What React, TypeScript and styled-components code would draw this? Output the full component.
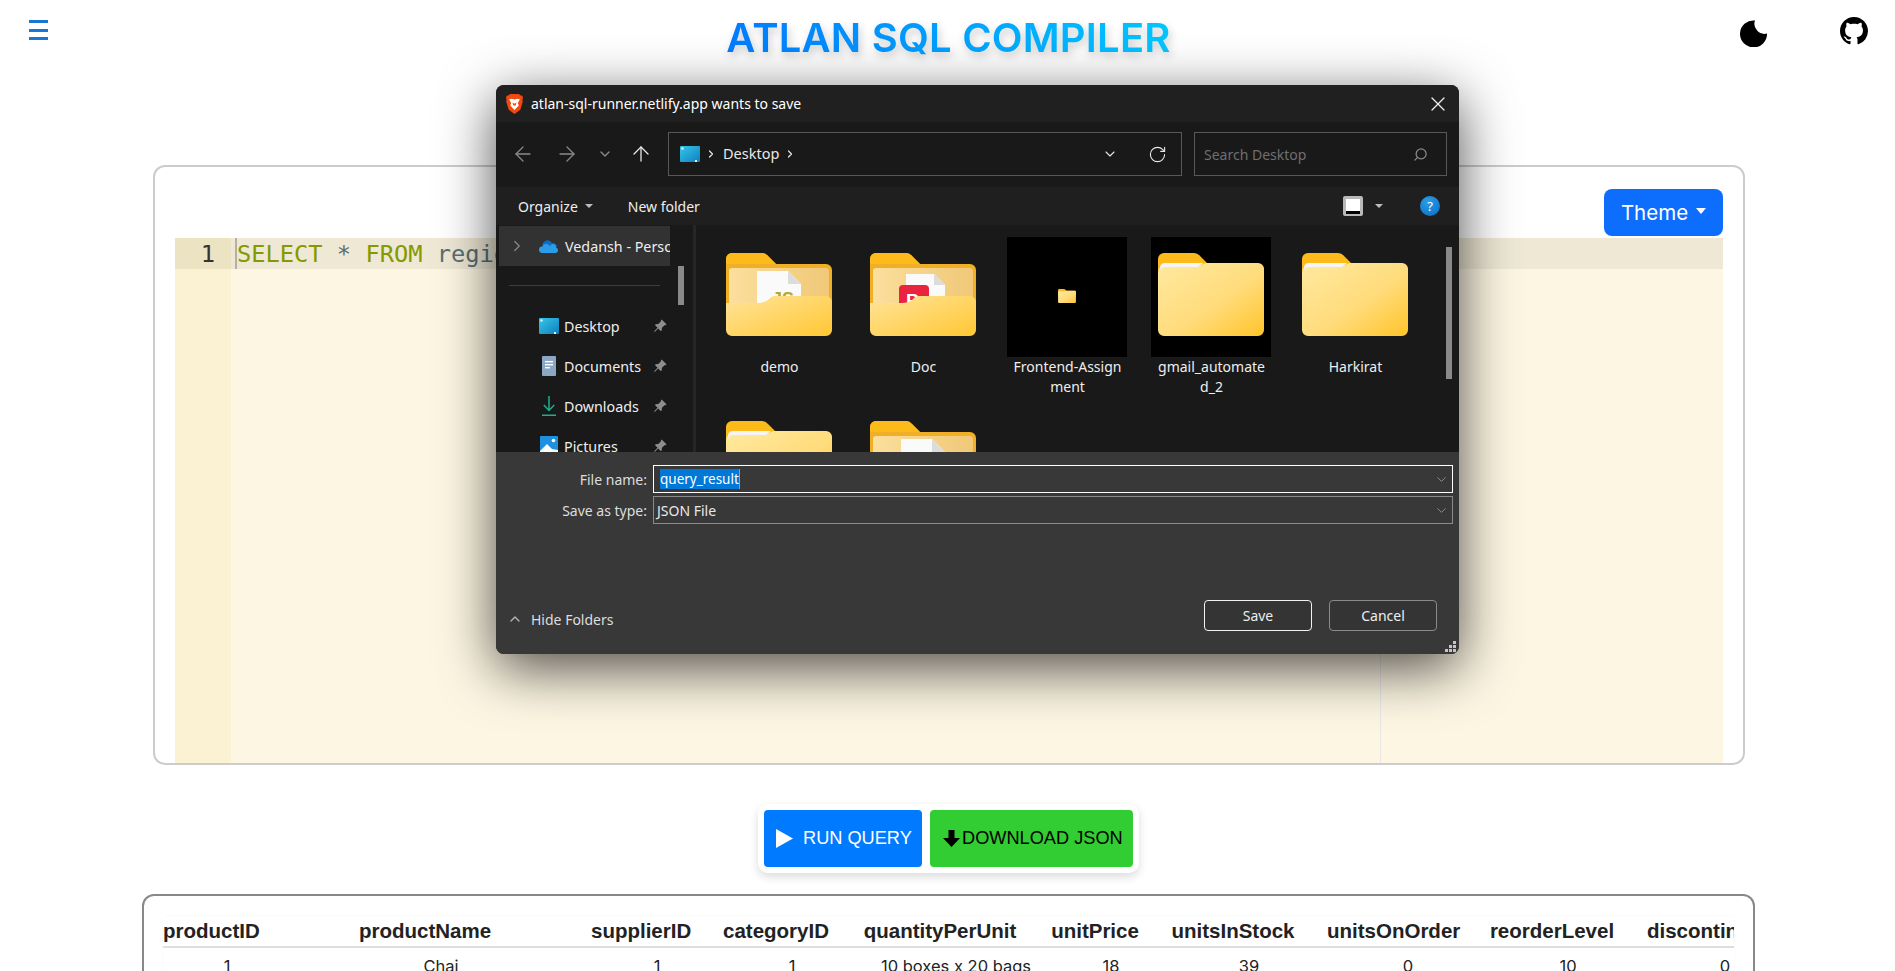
import React from 'react';
import styled, { createGlobalStyle } from 'styled-components';
import { ArrowLeft, ArrowRight, ArrowUp, ChevronDown, ChevronRight, ChevronUp, RotateCw, Search, X } from 'lucide-react';
import { BsGithub, BsPinAngleFill } from 'react-icons/bs';

const UI_FONT = '"Noto Sans", "Open Sans", sans-serif';
const APP_FONT = 'Inter, "Noto Sans", sans-serif';

const COLUMNS = [
  { name: 'productID', width: 128, value: '1' },
  { name: 'productName', width: 300, value: 'Chai' },
  { name: 'supplierID', width: 132, value: '1' },
  { name: 'categoryID', width: 138, value: '1' },
  { name: 'quantityPerUnit', width: 190, value: '10 boxes x 20 bags' },
  { name: 'unitPrice', width: 120, value: '18' },
  { name: 'unitsInStock', width: 156, value: '39' },
  { name: 'unitsOnOrder', width: 162, value: '0' },
  { name: 'reorderLevel', width: 158, value: '10' },
  { name: 'discontinued', width: 156, value: '0' },
];

const NAV_ITEMS = [
  { label: 'Desktop', icon: <DesktopIcon /> },
  { label: 'Documents', icon: <DocumentsIcon /> },
  { label: 'Downloads', icon: <DownloadsIcon /> },
  { label: 'Pictures', icon: <PicturesIcon /> },
];

function DesktopIcon() {
  return (
    <svg width="20" height="16" viewBox="0 0 20 16">
      <defs>
        <linearGradient id="desk" x1="0" y1="0" x2="1" y2="1">
          <stop offset="0" stopColor="#35c6e8" />
          <stop offset="1" stopColor="#0f7fc0" />
        </linearGradient>
      </defs>
      <rect width="20" height="16" rx="1" fill="url(#desk)" />
      <rect x="1.5" y="1.5" width="2" height="2" fill="#fff" />
      <rect x="15" y="14" width="2" height="2" fill="#e8f6fb" />
    </svg>
  );
}

function DocumentsIcon() {
  return (
    <svg width="14" height="20" viewBox="0 0 14 20">
      <rect width="14" height="20" rx="1" fill="#8ca6c6" />
      <rect x="3" y="5" width="8" height="1.4" fill="#fff" />
      <rect x="3" y="8" width="8" height="1.4" fill="#fff" />
      <rect x="3" y="11" width="5" height="1.4" fill="#fff" />
    </svg>
  );
}

function DownloadsIcon() {
  return (
    <svg width="14" height="20" viewBox="0 0 14 20" fill="none" stroke="#1bb08f" strokeWidth="1.5">
      <path d="M7 0v14M1.8 9L7 14.4 12.2 9M0 19.2h14" />
    </svg>
  );
}

function PicturesIcon() {
  return (
    <svg width="18" height="20" viewBox="0 0 18 20">
      <rect width="18" height="20" rx="1" fill="#1f8fe0" />
      <path d="M0 15l7-7 5 5 6 1v6H0z" fill="#fff" />
      <circle cx="13.5" cy="4.5" r="1.8" fill="#fff" />
    </svg>
  );
}

function CloudIcon() {
  return (
    <svg width="20" height="13" viewBox="0 0 20 13">
      <path d="M3.5 5.5A5 5 0 0 1 13 3.2 4 4 0 0 1 18 7H8z" fill="#0d6bc4" />
      <path d="M3.4 13A3.3 3.3 0 0 1 3.2 6.4 4.2 4.2 0 0 1 11 6.6 3 3 0 0 1 17 7.6 2.8 2.8 0 0 1 17 13z" fill="#2b9ce8" />
    </svg>
  );
}

function BraveIcon() {
  return (
    <svg width="17" height="20" viewBox="0 0 17 20">
      <path d="M4 0h9l1.5 1.6L16 1.4l1 2.1-.6 2.2.4 1.8-2.5 8.2L8.500 20l-5.800-4.300L.2 7.500l.4-1.800L0 3.500l1-2.100 1.500.2z" fill="#f1490f" />
      <path d="M3.200 5.200l2.800-.4 2.500.8 2.500-.8 2.800.4-2 4 1 2.400-4.300 4.300-4.300-4.300 1-2.400z" fill="#fff" />
      <path d="M6.500 8.500l2 1.200 2-1.200-.8 3H7.300z" fill="#f1490f" />
    </svg>
  );
}

function MoonIcon() {
  return (
    <svg width="27" height="27" viewBox="0 0 27 27">
      <path d="M15 .5A13.500 13.500 0 1 0 27 13.500 10 10 0 0 1 15 .5z" fill="#000" />
    </svg>
  );
}

function PlainFolder({ shine = true }: { shine?: boolean }) {
  return (
    <svg width="106" height="83" viewBox="0 0 106 83">
      <defs>
        <linearGradient id="plainFront" x1="0" y1="0" x2="1" y2="1">
          <stop offset="0" stopColor="#ffe99f" />
          <stop offset="0.55" stopColor="#ffdc7c" />
          <stop offset="1" stopColor="#ffc42a" />
        </linearGradient>
      </defs>
      <path d="M0 6a6 6 0 0 1 6-6h30a8 8 0 0 1 6 3l8 8h50a6 6 0 0 1 6 6v20H0z" fill="#fdbb1b" />
      <path d="M0 19a6 6 0 0 1 6-6h34l8-3h52a6 6 0 0 1 6 6v61a6 6 0 0 1-6 6H6a6 6 0 0 1-6-6z" fill="url(#plainFront)" />
      {shine && <path d="M2 14a5 5 0 0 1 5-4h38l-5 4H6a5 5 0 0 0-4 3z" fill="#f4f4f4" />}
    </svg>
  );
}

function FileFolder({ kind }: { kind: 'js' | 'pdf' }) {
  return (
    <svg width="106" height="83" viewBox="0 0 106 83">
      <defs>
        <linearGradient id="fileFront" x1="0" y1="0" x2="1" y2="1">
          <stop offset="0" stopColor="#ffe49a" />
          <stop offset="1" stopColor="#ffc733" />
        </linearGradient>
        <linearGradient id="fileInner" x1="0" y1="0" x2="1" y2="0">
          <stop offset="0" stopColor="#fbdf9c" />
          <stop offset="1" stopColor="#f0c878" />
        </linearGradient>
      </defs>
      <path d="M0 6a6 6 0 0 1 6-6h30a8 8 0 0 1 6 3l8 8h50a6 6 0 0 1 6 6v40H0z" fill="#f0af27" />
      <path d="M0 6a6 6 0 0 1 6-6h30a8 8 0 0 1 6 3l8 8H0z" fill="#fdbb1b" />
      <rect x="3" y="15" width="100" height="45" rx="3" fill="url(#fileInner)" />
      {kind === 'js' ? (
        <>
          <path d="M31 18h31l13 13v30H31z" fill="#fafafa" />
          <path d="M62 18l13 13H62z" fill="#dcdcdc" />
          <text x="46" y="52" fontFamily="Liberation Sans, sans-serif" fontWeight="700" fontSize="18" fill="#b3a92d">JS</text>
        </>
      ) : (
        <>
          <path d="M36 21h28l11 11v30H36z" fill="#fafafa" />
          <path d="M64 21l11 11H64z" fill="#dcdcdc" />
          <rect x="29" y="32" width="30" height="30" rx="4" fill="#e8243f" />
          <text x="36" y="54" fontFamily="Liberation Sans, sans-serif" fontWeight="700" fontSize="19" fill="#fff">P</text>
        </>
      )}
      <path d="M0 50h32q6 0 10-3l2-2a8 8 0 0 1 5-2h51a6 6 0 0 1 6 6v28a6 6 0 0 1-6 6H6a6 6 0 0 1-6-6z" fill="url(#fileFront)" />
    </svg>
  );
}

export default function App() {
  return (
    <Page>
      <GlobalStyle />

      <Header>
        <MenuButton aria-label="menu">
          <span />
          <span />
          <span />
        </MenuButton>
        <Title>ATLAN SQL COMPILER</Title>
        <HeaderActions>
          <MoonIcon />
          <BsGithub size={28} color="#000" />
        </HeaderActions>
      </Header>

      <EditorPanel>
        <ThemeRow>
          <ThemeButton>
            Theme <Caret />
          </ThemeButton>
        </ThemeRow>
        <Editor>
          <Gutter>
            <ActiveLineNumber>1</ActiveLineNumber>
          </Gutter>
          <Code>
            <ActiveLine>
              <Keyword>SELECT</Keyword> * <Keyword>FROM</Keyword> regions
            </ActiveLine>
            <PrintMargin />
          </Code>
        </Editor>
      </EditorPanel>

      <ActionsRow>
        <ActionGroup>
          <RunButton>
            <svg width="17" height="19" viewBox="0 0 17 19">
              <path d="M0 0l17 9.500L0 19z" fill="#fff" />
            </svg>
            RUN QUERY
          </RunButton>
          <DownloadButton>
            <svg width="17" height="17" viewBox="0 0 17 17">
              <path d="M5.500 0h6v8H17l-8.500 9L0 8h5.500z" fill="#000" />
            </svg>
            DOWNLOAD JSON
          </DownloadButton>
        </ActionGroup>
      </ActionsRow>

      <ResultPanel>
        <ResultClip>
          <ResultTable>
            <colgroup>
              {COLUMNS.map((c) => (
                <col key={c.name} style={{ width: c.width }} />
              ))}
            </colgroup>
            <thead>
              <tr>
                {COLUMNS.map((c) => (
                  <Th key={c.name}>{c.name}</Th>
                ))}
              </tr>
            </thead>
            <tbody>
              <tr>
                {COLUMNS.map((c) => (
                  <Td key={c.name}>{c.value}</Td>
                ))}
              </tr>
            </tbody>
          </ResultTable>
        </ResultClip>
      </ResultPanel>

      <Dialog>
        <TitleBar>
          <BraveIcon />
          <DialogTitle>atlan-sql-runner.netlify.app wants to save</DialogTitle>
          <CloseIcon size={24} strokeWidth={1.2} />
        </TitleBar>

        <AddressRow>
          <NavArrows>
            <NavBack size={24} />
            <NavForward size={24} />
            <RecentChevron size={16} />
            <NavUp size={24} />
          </NavArrows>
          <AddressBox>
            <DesktopIcon />
            <Crumb size={12} strokeWidth={2.4} />
            <AddressText>Desktop</AddressText>
            <Crumb size={12} strokeWidth={2.4} />
            <AddressSpacer />
            <ChevronDown size={16} color="#e4e4e4" strokeWidth={1.6} />
            <RefreshIcon size={19} strokeWidth={1.4} />
          </AddressBox>
          <SearchBox>
            <SearchPlaceholder>Search Desktop</SearchPlaceholder>
            <SearchIcon size={15} strokeWidth={2} />
          </SearchBox>
        </AddressRow>

        <ToolRow>
          <ToolLabel>Organize</ToolLabel>
          <SmallCaret />
          <NewFolder>New folder</NewFolder>
          <ToolSpacer />
          <ViewIcon>
            <span />
          </ViewIcon>
          <SmallCaret />
          <HelpIcon>?</HelpIcon>
        </ToolRow>

        <Browser>
          <NavPane>
            <NavHead>
              <ChevronRight size={18} color="#8a8a8a" strokeWidth={1.6} />
              <CloudIcon />
              <NavHeadText>Vedansh - Personal</NavHeadText>
            </NavHead>
            <NavDivider />
            {NAV_ITEMS.map((item) => (
              <NavItem key={item.label}>
                <NavIconBox>{item.icon}</NavIconBox>
                <NavLabel>{item.label}</NavLabel>
                <BsPinAngleFill size={14} color="#8d8d8d" />
              </NavItem>
            ))}
            <NavScrollbar />
          </NavPane>

          <FileGrid>
            <FileTile>
              <Thumb>
                <FileFolder kind="js" />
              </Thumb>
              <FileLabel>demo</FileLabel>
            </FileTile>
            <FileTile>
              <Thumb>
                <FileFolder kind="pdf" />
              </Thumb>
              <FileLabel>Doc</FileLabel>
            </FileTile>
            <FileTile>
              <Thumb $black>
                <TinyFolder>
                  <PlainFolder shine={false} />
                </TinyFolder>
              </Thumb>
              <FileLabel>Frontend-Assign ment</FileLabel>
            </FileTile>
            <FileTile>
              <Thumb $black>
                <PlainFolder />
              </Thumb>
              <FileLabel>gmail_automate d_2</FileLabel>
            </FileTile>
            <FileTile>
              <Thumb>
                <PlainFolder />
              </Thumb>
              <FileLabel>Harkirat</FileLabel>
            </FileTile>
            <FileTile>
              <Thumb>
                <PlainFolder />
              </Thumb>
            </FileTile>
            <FileTile>
              <Thumb>
                <FileFolder kind="js" />
              </Thumb>
            </FileTile>
            <FilesScrollbar />
          </FileGrid>
        </Browser>

        <SaveArea>
          <FieldRow>
            <FieldLabel>File name:</FieldLabel>
            <FieldBox $focused>
              <Selected>query_result</Selected>
              <Caretline />
              <FieldSpacer />
              <ChevronDown size={15} color="#a8a8a8" strokeWidth={1.2} />
            </FieldBox>
          </FieldRow>
          <FieldRow>
            <FieldLabel>Save as type:</FieldLabel>
            <FieldBox>
              <span>JSON File</span>
              <FieldSpacer />
              <ChevronDown size={15} color="#a8a8a8" strokeWidth={1.2} />
            </FieldBox>
          </FieldRow>
          <DialogFooter>
            <HideFolders>
              <ChevronUp size={16} color="#b5b5b5" strokeWidth={2} />
              Hide Folders
            </HideFolders>
            <DialogButton $primary>Save</DialogButton>
            <DialogButton>Cancel</DialogButton>
          </DialogFooter>
          <ResizeGrip width="11" height="11" viewBox="0 0 11 11">
            <path d="M8 0h3v3H8zM4 4h3v3H4zM8 4h3v3H8zM0 8h3v3H0zM4 8h3v3H4zM8 8h3v3H8z" fill="#c4c4c4" />
          </ResizeGrip>
        </SaveArea>
      </Dialog>
    </Page>
  );
}

const GlobalStyle = createGlobalStyle`
  html, body {
    margin: 0;
    height: 971px;
    overflow: hidden;
    background: #fff;
    font-family: ${APP_FONT};
  }
  * {
    box-sizing: border-box;
  }
`;

const Page = styled.div`
  position: relative;
  height: 971px;
  overflow: hidden;
`;

const Header = styled.header`
  display: grid;
  grid-template-columns: 1fr auto 1fr;
  height: 165px;
  padding: 17px 27px 0 29px;
`;

const MenuButton = styled.div`
  display: flex;
  flex-direction: column;
  gap: 5.500px;
  width: 19px;
  padding-top: 3px;

  span {
    height: 3px;
    background: #1976d2;
  }
`;

const Title = styled.h1`
  margin: -1px 0 0;
  height: 50px;
  font-size: 40px;
  line-height: 44px;
  font-weight: 600;
  letter-spacing: 0.2px;
  background: linear-gradient(90deg, #007bff, #00c6ff);
  -webkit-background-clip: text;
  background-clip: text;
  color: transparent;
  filter: drop-shadow(2px 4px 4px rgba(0, 0, 0, 0.2));
`;

const HeaderActions = styled.div`
  display: flex;
  justify-content: flex-end;
  align-items: flex-start;
  gap: 73px;

  svg:first-child {
    margin-top: 3px;
  }
`;

const EditorPanel = styled.section`
  display: flex;
  flex-direction: column;
  height: 600px;
  margin: 0 150px 0 153px;
  padding: 22px 20px 0 20px;
  border: 2px solid #ccc;
  border-radius: 12px;
  overflow: hidden;
`;

const ThemeRow = styled.div`
  display: flex;
  justify-content: flex-end;
  margin-bottom: 2px;
`;

const ThemeButton = styled.div`
  display: flex;
  align-items: center;
  justify-content: center;
  gap: 8px;
  width: 119px;
  height: 47px;
  background: #0d6efd;
  border-radius: 8px;
  color: #fff;
  font-size: 20.500px;
`;

const Caret = styled.span`
  width: 0;
  height: 0;
  border-left: 5.500px solid transparent;
  border-right: 5.500px solid transparent;
  border-top: 6px solid #fff;
  margin-top: -3px;
`;

const Editor = styled.div`
  flex: 1;
  display: flex;
  background: #fdf6e3;
  font-family: 'DejaVu Sans Mono', monospace;
  font-size: 23.700px;
  line-height: 31px;
  color: #586e75;
`;

const Gutter = styled.div`
  width: 56px;
  background: #fbf1d3;
`;

const ActiveLineNumber = styled.div`
  height: 31px;
  padding: 1px 16px 0 0;
  background: #ebe3c1;
  color: #333;
  text-align: right;
`;

const Code = styled.div`
  position: relative;
  flex: 1;
`;

const ActiveLine = styled.div`
  height: 31px;
  padding-top: 1px;
  background: #eee8d5;
  border-left: 2px solid #b3b0a5;
  margin-left: 4px;
  box-shadow: -4px 0 0 #eee8d5;
  white-space: pre;
`;

const Keyword = styled.span`
  color: #859900;
`;

const PrintMargin = styled.div`
  position: absolute;
  top: 0;
  bottom: 0;
  left: 1149px;
  width: 1px;
  background: #e8e8e8;
`;

const ActionsRow = styled.div`
  display: flex;
  justify-content: center;
  margin-top: 39px;
  padding-left: 2px;
`;

const ActionGroup = styled.div`
  display: flex;
  gap: 8px;
  padding: 6px;
  background: #fff;
  border-radius: 10px;
  box-shadow: 0 4px 10px rgba(0, 0, 0, 0.14);
`;

const ActionButton = styled.div`
  display: flex;
  align-items: center;
  height: 57px;
  border-radius: 4px;
  font-family: 'Liberation Sans', sans-serif;
  font-size: 18.200px;
`;

const RunButton = styled(ActionButton)`
  gap: 10px;
  width: 158px;
  padding-left: 12px;
  background: #007bff;
  color: #fff;
`;

const DownloadButton = styled(ActionButton)`
  gap: 2px;
  width: 203px;
  padding-left: 13px;
  background: #32cd32;
  color: #000;
`;

const ResultPanel = styled.section`
  margin: 21px 140px 0 142px;
  padding: 20px 19px 0 19px;
  height: 200px;
  border: 2px solid #888;
  border-radius: 12px;
`;

const ResultClip = styled.div`
  overflow: hidden;
  box-shadow: 0 0 2px rgba(0, 0, 0, 0.05);
`;

const ResultTable = styled.table`
  table-layout: fixed;
  border-collapse: collapse;
  width: 1640px;
`;

const Th = styled.th`
  height: 31px;
  padding: 0 32px 0 0;
  border-bottom: 2px solid #dedede;
  font-family: 'Liberation Sans', sans-serif;
  font-size: 20.500px;
  font-weight: 700;
  color: #222;
  text-align: center;
  white-space: nowrap;
`;

const Td = styled.td`
  padding: 6px 0;
  font-size: 16.500px;
  line-height: 24px;
  color: #222;
  text-align: center;
  white-space: nowrap;
`;

const Dialog = styled.div`
  position: absolute;
  left: 496px;
  top: 85px;
  width: 963px;
  height: 569px;
  display: flex;
  flex-direction: column;
  border-radius: 8px;
  overflow: hidden;
  background: #383838;
  color: #fff;
  font-family: ${UI_FONT};
  font-size: 14px;
  box-shadow: 0 14px 55px rgba(0, 0, 0, 0.7);

  svg {
    flex-shrink: 0;
  }
`;

const TitleBar = styled.div`
  display: flex;
  align-items: center;
  gap: 8px;
  height: 37px;
  padding: 0 9px 0 10px;
  background: #202020;
  flex-shrink: 0;
`;

const DialogTitle = styled.span`
  flex: 1;
  font-size: 14px;
`;

const CloseIcon = styled(X)`
  color: #eee;
`;

const AddressRow = styled.div`
  display: flex;
  align-items: flex-start;
  height: 65px;
  padding: 10px 12px 0 15px;
  background: #191919;
  flex-shrink: 0;
`;

const NavArrows = styled.div`
  display: flex;
  align-items: center;
  height: 44px;
  width: 157px;
`;

const NavBack = styled(ArrowLeft)`
  color: #8a8a8a;
  margin-right: 20px;
  stroke-width: 1.300;
`;

const NavForward = styled(ArrowRight)`
  color: #8a8a8a;
  margin-right: 18px;
  stroke-width: 1.300;
`;

const RecentChevron = styled(ChevronDown)`
  color: #8a8a8a;
  margin-right: 16px;
`;

const NavUp = styled(ArrowUp)`
  color: #e8e8e8;
  stroke-width: 1.300;
`;

const AddressBox = styled.div`
  display: flex;
  align-items: center;
  width: 514px;
  height: 44px;
  padding: 0 14px 0 11px;
  border: 1px solid #585858;
`;

const Crumb = styled(ChevronRight)`
  margin: 0 6px 0 5px;
  color: #e8e8e8;
`;

const AddressText = styled.span`
  margin-top: -2px;
  font-size: 14.500px;
  color: #e8e8e8;
`;

const AddressSpacer = styled.div`
  flex: 1;
`;

const RefreshIcon = styled(RotateCw)`
  margin-left: 30px;
  color: #e8e8e8;
`;

const SearchBox = styled.div`
  display: flex;
  align-items: center;
  justify-content: space-between;
  width: 253px;
  height: 44px;
  margin-left: 12px;
  padding: 0 18px 0 9px;
  border: 1px solid #585858;
`;

const SearchPlaceholder = styled.span`
  color: #6f6f6f;
  font-size: 14px;
`;

const SearchIcon = styled(Search)`
  color: #8a8a8a;
  transform: scaleX(-1);
`;

const ToolRow = styled.div`
  display: flex;
  align-items: center;
  height: 38px;
  padding: 0 19px 0 22px;
  background: #1f1f1f;
  flex-shrink: 0;
`;

const ToolLabel = styled.span`
  font-size: 14px;
  color: #eee;
`;

const SmallCaret = styled.span`
  width: 0;
  height: 0;
  margin: 0 7px;
  border-left: 4px solid transparent;
  border-right: 4px solid transparent;
  border-top: 4px solid #bdbdbd;
`;

const NewFolder = styled.span`
  margin-left: 28px;
  font-size: 14px;
  color: #eee;
`;

const ToolSpacer = styled.div`
  flex: 1;
`;

const ViewIcon = styled.div`
  display: flex;
  align-items: flex-start;
  width: 20px;
  height: 20px;
  padding: 3px;
  background: #b9b9b9;
  border-radius: 2px;
  margin-right: 5px;

  span {
    width: 14px;
    height: 12px;
    background: #fff;
    box-shadow: 0 1px 0 #000, 0 3px 0 #000;
  }
`;

const HelpIcon = styled.div`
  display: flex;
  align-items: center;
  justify-content: center;
  width: 20px;
  height: 20px;
  margin-left: 30px;
  border-radius: 50%;
  background: radial-gradient(circle at 40% 30%, #2a9ee8, #0a6cc0);
  color: #fff;
  font-size: 13px;
`;

const Browser = styled.div`
  display: flex;
  height: 227px;
  background: #191919;
  flex-shrink: 0;
  overflow: hidden;
`;

const NavPane = styled.div`
  position: relative;
  width: 200px;
  padding: 1px 0 0 3px;
  border-right: 3px solid #262626;
  overflow: hidden;
  flex-shrink: 0;
`;

const NavHead = styled.div`
  display: flex;
  align-items: center;
  gap: 13px;
  width: 171px;
  height: 40px;
  padding-left: 9px;
  background: #323232;
  overflow: hidden;
  white-space: nowrap;
`;

const NavHeadText = styled.span`
  font-size: 14.300px;
  color: #eee;
  margin-left: -7px;
`;

const NavDivider = styled.div`
  width: 151px;
  height: 1px;
  margin: 19px 0 20px 10px;
  background: #3d3d3d;
`;

const NavItem = styled.div`
  display: flex;
  align-items: center;
  height: 40px;
  width: 168px;
  padding-left: 40px;
  white-space: nowrap;
`;

const NavIconBox = styled.div`
  display: flex;
  justify-content: center;
  width: 20px;
  margin-right: 5px;
`;

const NavLabel = styled.span`
  flex: 1;
  font-size: 14.300px;
  color: #eee;
`;

const NavScrollbar = styled.div`
  position: absolute;
  left: 182px;
  top: 41px;
  width: 6px;
  height: 39px;
  background: #8a8a8a;
`;

const FileGrid = styled.div`
  position: relative;
  flex: 1;
  display: grid;
  grid-template-columns: repeat(5, 120px);
  column-gap: 24px;
  align-content: start;
  padding: 12px 0 0 30px;
  margin-left: -7px;
`;

const FileTile = styled.div`
  display: flex;
  flex-direction: column;
  align-items: center;
  height: 168px;
`;

const Thumb = styled.div<{ $black?: boolean }>`
  display: flex;
  align-items: center;
  justify-content: center;
  width: 120px;
  height: 120px;
  padding-bottom: 6px;
  flex-shrink: 0;
  background: ${(p) => (p.$black ? '#000' : 'transparent')};
`;

const TinyFolder = styled.div`
  margin-top: 4px;

  svg {
    display: block;
    width: 18px;
    height: 14px;
  }
`;

const FileLabel = styled.div`
  width: 120px;
  padding-left: 1px;
  font-size: 14px;
  line-height: 20px;
  text-align: center;
  color: #eee;
`;

const FilesScrollbar = styled.div`
  position: absolute;
  right: 7px;
  top: 22px;
  width: 6px;
  height: 132px;
  background: #8a8a8a;
`;

const SaveArea = styled.div`
  position: relative;
  flex: 1;
  padding: 13px 6px 0 0;
  background: #383838;
`;

const FieldRow = styled.div`
  display: flex;
  align-items: center;
  margin-bottom: 3px;
`;

const FieldLabel = styled.span`
  width: 157px;
  padding-right: 6px;
  font-size: 14px;
  text-align: right;
  color: #ddd;
  flex-shrink: 0;
`;

const FieldBox = styled.div<{ $focused?: boolean }>`
  flex: 1;
  display: flex;
  align-items: center;
  height: 28px;
  padding: 0 3px;
  border: 1px solid ${(p) => (p.$focused ? '#fff' : '#8a8a8a')};
  font-size: 14px;
  color: #e8e8e8;
  padding-left: ${(p) => (p.$focused ? 6 : 3)}px;
`;

const Selected = styled.span`
  background: #0078d7;
  color: #fff;
  line-height: 20px;
  font-size: 13.500px;
`;

const Caretline = styled.span`
  width: 1px;
  height: 20px;
  background: #e88a2a;
`;

const FieldSpacer = styled.div`
  flex: 1;
`;

const DialogFooter = styled.div`
  display: flex;
  align-items: center;
  gap: 17px;
  margin-top: 76px;
  padding: 0 16px 0 11px;
`;

const HideFolders = styled.div`
  flex: 1;
  display: flex;
  align-items: center;
  gap: 8px;
  margin-top: 7px;
  font-size: 14px;
  color: #ddd;
`;

const DialogButton = styled.div<{ $primary?: boolean }>`
  display: flex;
  align-items: center;
  justify-content: center;
  width: 108px;
  height: 31px;
  border: 1px solid ${(p) => (p.$primary ? '#f2f2f2' : '#8a8a8a')};
  border-radius: 4px;
  background: #343434;
  font-size: 14px;
  color: #eee;
`;

const ResizeGrip = styled.svg`
  position: absolute;
  right: 3px;
  bottom: 2px;
`;
